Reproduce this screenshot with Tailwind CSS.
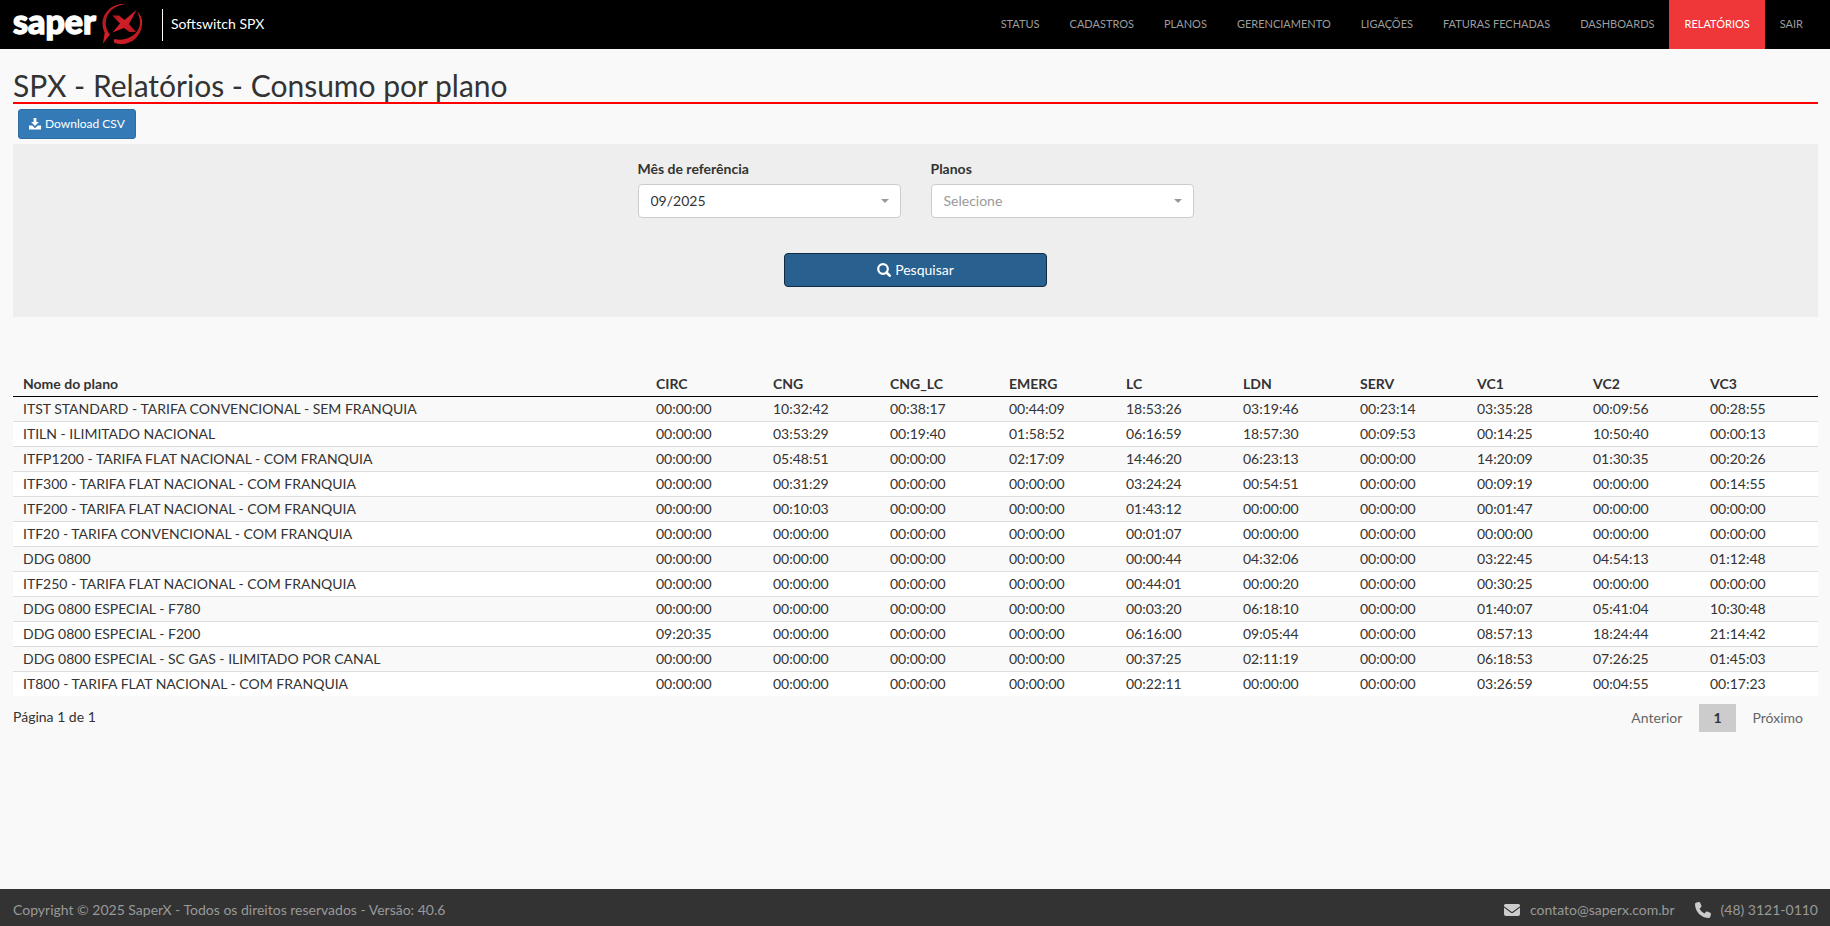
<!DOCTYPE html>
<html lang="pt-BR">
<head>
<meta charset="utf-8">
<meta name="viewport" content="width=device-width, initial-scale=1">
<title>SPX - Relatórios - Consumo por plano</title>
<script src="https://cdn.jsdelivr.net/npm/@tailwindcss/browser@4"></script>
</head>
<body class="flex min-h-screen flex-col bg-[#f9f9f9] font-['Lato',sans-serif] text-sm leading-5 text-[#333]">
<header class="flex h-[49px] shrink-0 items-center justify-between bg-black px-3">
  <div class="flex h-full items-center">
    <a href="#" aria-label="SaperX" class="flex h-full items-start">
      <svg class="h-12 w-[132px]" viewBox="12 0 132 48" aria-hidden="true">
        <defs><linearGradient id="red" x1="0" y1="0" x2="1" y2="1"><stop offset="0" stop-color="#a3121a"/><stop offset=".5" stop-color="#d21f28"/><stop offset="1" stop-color="#b0141c"/></linearGradient></defs>
        <text x="13" y="34" font-family="Lato" font-weight="900" font-size="34" fill="#fff" stroke="#fff" stroke-width="1.400">saper</text>
        <g fill="url(#red)">
          <path d="M125 4.200C112 3 102.500 13 102.500 23.500c0 4 1.300 7.500 2.200 9L103 43.500 110 34.500C107 31.500 105.500 27 105.700 22.500 106 13 114 5.500 125 4.200Z"/>
          <path d="M137 11.500C141 15 142.500 19 142 25 141 36 132 44 122 44c-3 0-6-.5-7.800-1.500-.8-1.500-.4-3 .8-3.500 3 1 7 1 10 0C134 36.500 139.500 31 140 23c.2-4.500-1-8-3-11.500Z"/>
          <path d="M112.300 15.500h6.700l5.500 4.500L136.700 9.700 129 24l7 8h-6.500l-5.500-4-11.500 4.500 7.500-9Z"/>
        </g>
      </svg>
    </a>
    <div class="ml-[18px] flex h-8 items-center border-l border-white pb-[2px] pl-2 text-white">Softswitch SPX</div>
  </div>
  <nav class="flex h-full text-[11px] text-[#9d9d9d]">
    <a href="#" class="flex items-center px-[15px] pb-[2px]">STATUS</a>
    <a href="#" class="flex items-center px-[15px] pb-[2px]">CADASTROS</a>
    <a href="#" class="flex items-center px-[15px] pb-[2px]">PLANOS</a>
    <a href="#" class="flex items-center px-[15px] pb-[2px]">GERENCIAMENTO</a>
    <a href="#" class="flex items-center px-[15px] pb-[2px]">LIGAÇÕES</a>
    <a href="#" class="flex items-center px-[15px] pb-[2px]">FATURAS FECHADAS</a>
    <a href="#" class="flex items-center px-[15px] pb-[2px]">DASHBOARDS</a>
    <a href="#" aria-current="page" class="flex items-center bg-[#ef3739] px-[15px] pb-[2px] text-white">RELATÓRIOS</a>
    <a href="#" class="flex items-center px-[15px] pb-[2px]">SAIR</a>
  </nav>
</header>

<main class="grow pt-5 pr-3 pl-[13px]">
  <h1 class="border-b-2 border-[#f00] text-[30px] leading-[33px]">SPX - Relatórios - Consumo por plano</h1>
  <button type="button" class="m-[5px] flex h-[30px] items-center gap-1 rounded-[3px] border border-[#2e6da4] bg-[#337ab7] px-[10px] text-xs text-white">
    <svg class="h-3 w-3" viewBox="0 0 12 12" fill="currentColor" aria-hidden="true"><path d="M4.600 0h2.800v4h2.500L6 8 2.100 4h2.500ZM0 7.500h3.200L6 10.200 8.800 7.500H12v3.900H0Z"/></svg>
    Download CSV
  </button>

  <form class="bg-[#eee] px-5 pt-[15px] pb-[30px]">
    <div class="flex flex-wrap justify-center gap-[30px]">
      <div class="w-[263px]">
        <label for="mes" class="mb-[5px] block font-bold">Mês de referência</label>
        <div class="relative">
          <select id="mes" class="h-[34px] w-full appearance-none rounded border border-[#ccc] bg-white px-3"><option>09/2025</option></select>
          <svg class="pointer-events-none absolute top-[15px] right-3 h-1 w-2" viewBox="0 0 8 4" fill="#999" aria-hidden="true"><path d="M0 0h8L4 4Z"/></svg>
        </div>
      </div>
      <div class="w-[263px]">
        <label for="planos" class="mb-[5px] block font-bold">Planos</label>
        <div class="relative">
          <select id="planos" class="h-[34px] w-full appearance-none rounded border border-[#ccc] bg-white px-3 text-[#999]"><option>Selecione</option></select>
          <svg class="pointer-events-none absolute top-[15px] right-3 h-1 w-2" viewBox="0 0 8 4" fill="#999" aria-hidden="true"><path d="M0 0h8L4 4Z"/></svg>
        </div>
      </div>
    </div>
    <button type="button" class="mx-auto mt-[35px] flex h-[34px] w-[263px] items-center justify-center gap-1 rounded border border-[#122b40] bg-[#286090] text-white">
      <svg class="h-[14px] w-[14px]" viewBox="0 0 14 14" fill="none" stroke="currentColor" stroke-width="2.200" aria-hidden="true"><circle cx="6" cy="6" r="4.800"/><path d="m9.500 9.500 3.200 3.200" stroke-width="2.600" stroke-linecap="round"/></svg>
      Pesquisar
    </button>
  </form>

  <table class="mt-[55px] w-full table-fixed border-separate border-spacing-0 text-left">
    <colgroup><col><col class="w-[117px]"><col class="w-[117px]"><col class="w-[119px]"><col class="w-[117px]"><col class="w-[117px]"><col class="w-[117px]"><col class="w-[117px]"><col class="w-[116px]"><col class="w-[117px]"><col class="w-[118px]"></colgroup>
    <thead><tr id="head"></tr></thead>
    <tbody id="rows"></tbody>
  </table>

  <div class="mt-2 flex items-start justify-between">
    <p class="leading-[26px]">Página 1 de 1</p>
    <nav aria-label="Paginação" class="flex gap-[2px] leading-7 text-[#666]">
      <button type="button" class="px-[15px]">Anterior</button>
      <button type="button" aria-current="page" class="bg-[#ccc] px-[14px] font-bold text-[#333]">1</button>
      <button type="button" class="px-[15px]">Próximo</button>
    </nav>
  </div>
</main>

<footer class="flex h-[37px] shrink-0 items-center justify-between bg-[#333] pt-[5px] pr-3 pl-[13px] text-[#999]">
  <p>Copyright © 2025 SaperX - Todos os direitos reservados - Versão: 40.6</p>
  <div class="flex gap-5">
    <a href="mailto:contato@saperx.com.br" class="flex items-center gap-[10px]">
      <svg class="h-4 w-4 text-[#ccc]" viewBox="0 0 16 16" fill="currentColor" aria-hidden="true"><path d="M1.500 2h13A1.500 1.500 0 0 1 16 3.500v.8L8.900 9.600a1.500 1.500 0 0 1-1.800 0L0 4.300v-.8A1.500 1.500 0 0 1 1.500 2ZM0 5.600l6.500 4.800a2.500 2.500 0 0 0 3 0L16 5.600V12a2 2 0 0 1-2 2H2a2 2 0 0 1-2-2Z"/></svg>
      contato@saperx.com.br
    </a>
    <a href="tel:+554831210110" class="flex items-center gap-[10px]">
      <svg class="h-4 w-4 text-[#ccc]" viewBox="0 0 512 512" fill="currentColor" aria-hidden="true"><path d="M164.900 24.600c-7.700-18.600-28-28.500-47.400-23.200l-88 24C12.100 30.200 0 46 0 64c0 247.400 200.600 448 448 448 18 0 33.800-12.100 38.600-29.500l24-88c5.300-19.400-4.600-39.700-23.200-47.400l-96-40c-16.300-6.800-35.200-2.100-46.300 11.600L304.700 368C234.300 334.700 177.300 277.700 144 207.300l49.300-40.400c13.700-11.200 18.400-30 11.600-46.300Z"/></svg>
      (48) 3121-0110
    </a>
  </div>
</footer>

<script>
const columns = ['Nome do plano','CIRC','CNG','CNG_LC','EMERG','LC','LDN','SERV','VC1','VC2','VC3'];
const plans = [
  ['ITST STANDARD - TARIFA CONVENCIONAL - SEM FRANQUIA','00:00:00 10:32:42 00:38:17 00:44:09 18:53:26 03:19:46 00:23:14 03:35:28 00:09:56 00:28:55'],
  ['ITILN - ILIMITADO NACIONAL','00:00:00 03:53:29 00:19:40 01:58:52 06:16:59 18:57:30 00:09:53 00:14:25 10:50:40 00:00:13'],
  ['ITFP1200 - TARIFA FLAT NACIONAL - COM FRANQUIA','00:00:00 05:48:51 00:00:00 02:17:09 14:46:20 06:23:13 00:00:00 14:20:09 01:30:35 00:20:26'],
  ['ITF300 - TARIFA FLAT NACIONAL - COM FRANQUIA','00:00:00 00:31:29 00:00:00 00:00:00 03:24:24 00:54:51 00:00:00 00:09:19 00:00:00 00:14:55'],
  ['ITF200 - TARIFA FLAT NACIONAL - COM FRANQUIA','00:00:00 00:10:03 00:00:00 00:00:00 01:43:12 00:00:00 00:00:00 00:01:47 00:00:00 00:00:00'],
  ['ITF20 - TARIFA CONVENCIONAL - COM FRANQUIA','00:00:00 00:00:00 00:00:00 00:00:00 00:01:07 00:00:00 00:00:00 00:00:00 00:00:00 00:00:00'],
  ['DDG 0800','00:00:00 00:00:00 00:00:00 00:00:00 00:00:44 04:32:06 00:00:00 03:22:45 04:54:13 01:12:48'],
  ['ITF250 - TARIFA FLAT NACIONAL - COM FRANQUIA','00:00:00 00:00:00 00:00:00 00:00:00 00:44:01 00:00:20 00:00:00 00:30:25 00:00:00 00:00:00'],
  ['DDG 0800 ESPECIAL - F780','00:00:00 00:00:00 00:00:00 00:00:00 00:03:20 06:18:10 00:00:00 01:40:07 05:41:04 10:30:48'],
  ['DDG 0800 ESPECIAL - F200','09:20:35 00:00:00 00:00:00 00:00:00 06:16:00 09:05:44 00:00:00 08:57:13 18:24:44 21:14:42'],
  ['DDG 0800 ESPECIAL - SC GAS - ILIMITADO POR CANAL','00:00:00 00:00:00 00:00:00 00:00:00 00:37:25 02:11:19 00:00:00 06:18:53 07:26:25 01:45:03'],
  ['IT800 - TARIFA FLAT NACIONAL - COM FRANQUIA','00:00:00 00:00:00 00:00:00 00:00:00 00:22:11 00:00:00 00:00:00 03:26:59 00:04:55 00:17:23'],
];
document.getElementById('head').innerHTML = columns.map(c => `<th scope="col" class="h-[25px] border-b border-black px-[10px] font-bold">${c}</th>`).join('');
document.getElementById('rows').innerHTML = plans.map(([name, times]) =>
  `<tr class="group even:bg-white">${[name, ...times.split(' ')].map(v => `<td class="h-[25px] border-b border-[#ddd] px-[10px] group-last:h-6 group-last:border-b-0">${v}</td>`).join('')}</tr>`).join('');
</script>
</body>
</html>
